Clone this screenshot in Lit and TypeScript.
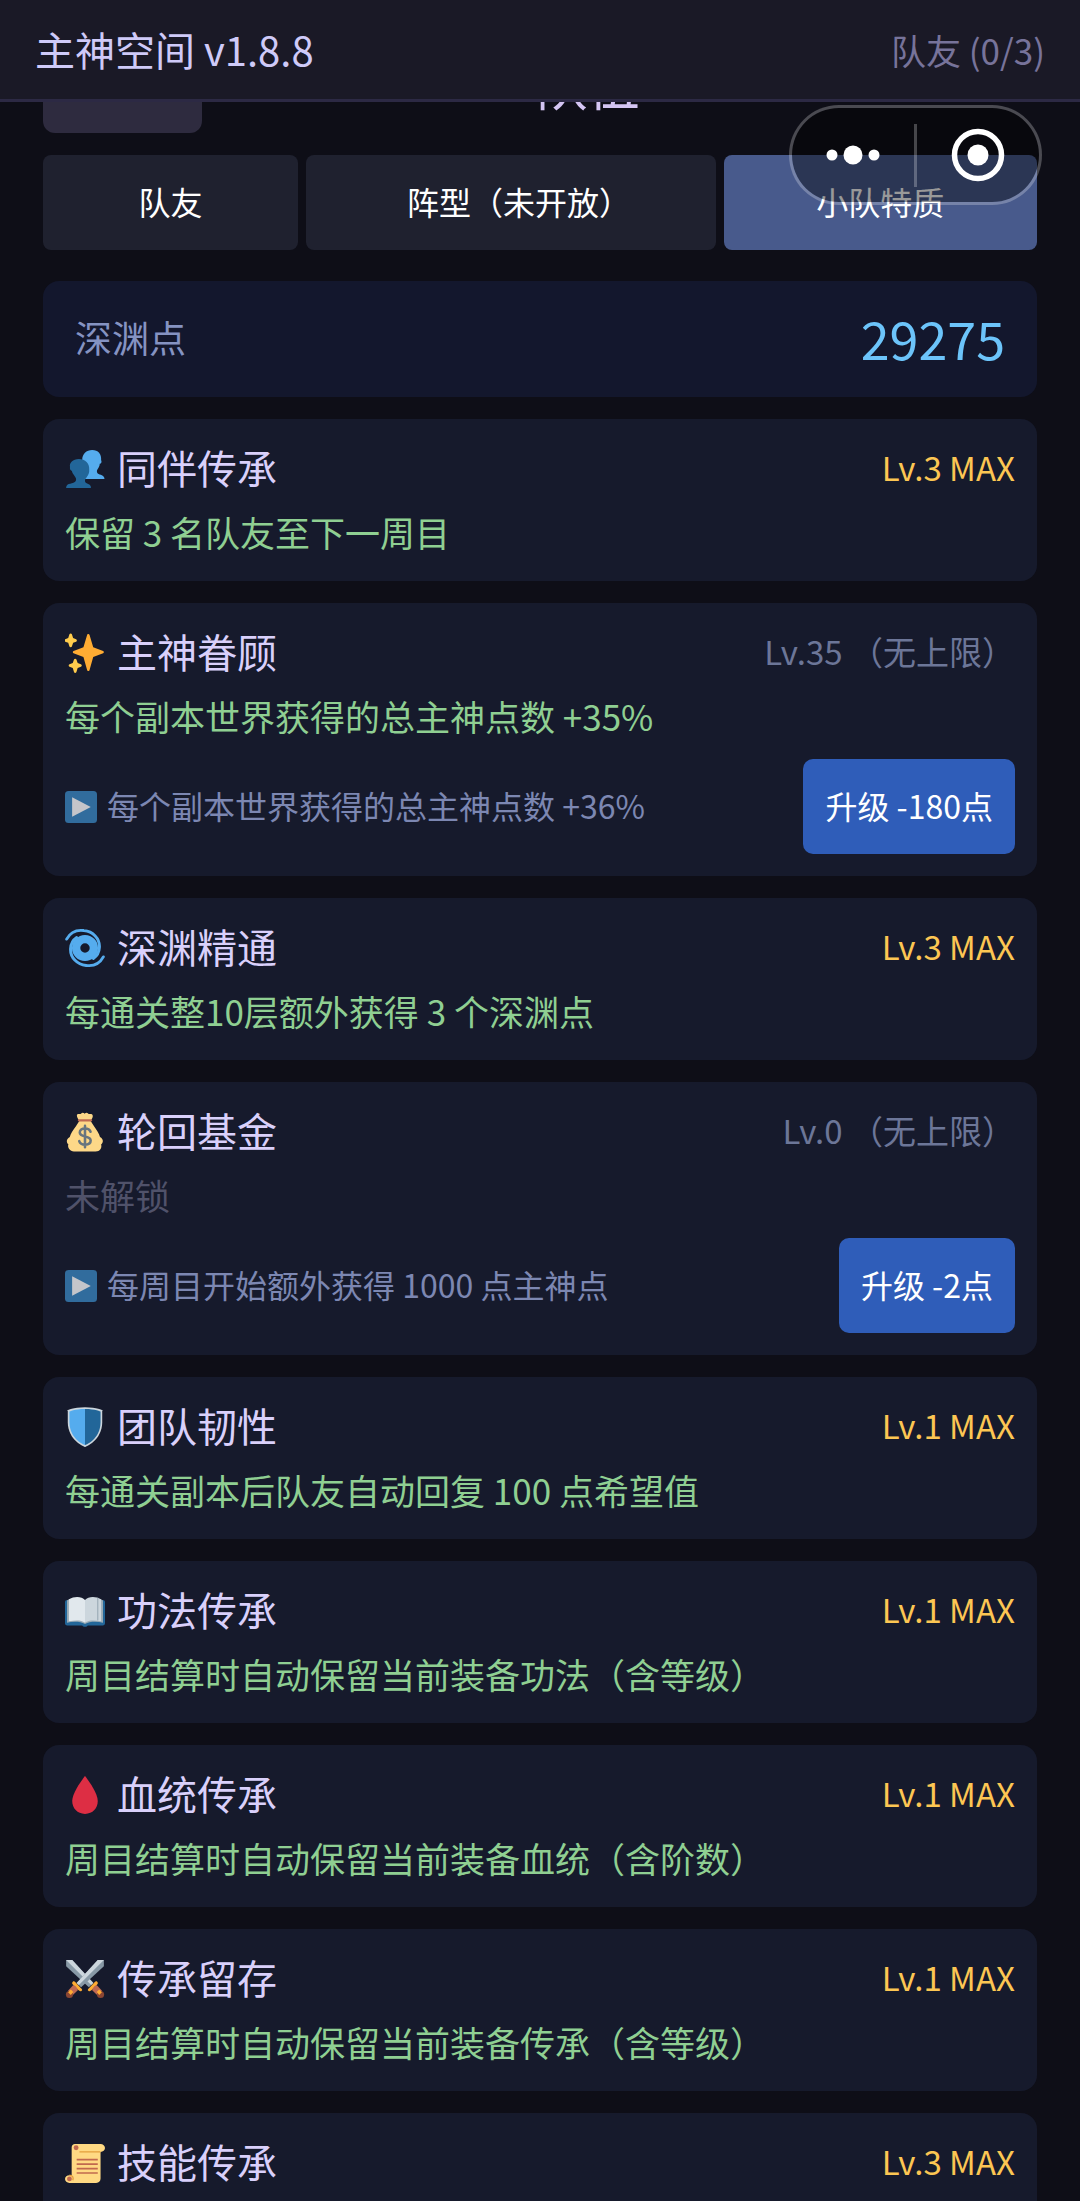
import {LitElement, html, css, svg, nothing} from 'lit';
import {customElement, property} from 'lit/decorators.js';
import {classMap} from 'lit/directives/class-map.js';

interface Trait {
  icon: string;
  name: string;
  level: string;
  max: boolean;
  effect: string;
  locked?: boolean;
  next?: string;
  cost?: number;
}

const TRAITS: Trait[] = [
  {icon: 'people', name: '同伴传承', level: 'Lv.3 MAX', max: true, effect: '保留 3 名队友至下一周目'},
  {
    icon: 'sparkles', name: '主神眷顾', level: 'Lv.35 （无上限）', max: false,
    effect: '每个副本世界获得的总主神点数 +35%',
    next: '每个副本世界获得的总主神点数 +36%', cost: 180,
  },
  {icon: 'cyclone', name: '深渊精通', level: 'Lv.3 MAX', max: true, effect: '每通关整10层额外获得 3 个深渊点'},
  {
    icon: 'bag', name: '轮回基金', level: 'Lv.0 （无上限）', max: false,
    effect: '未解锁', locked: true,
    next: '每周目开始额外获得 1000 点主神点', cost: 2,
  },
  {icon: 'shield', name: '团队韧性', level: 'Lv.1 MAX', max: true, effect: '每通关副本后队友自动回复 100 点希望值'},
  {icon: 'book', name: '功法传承', level: 'Lv.1 MAX', max: true, effect: '周目结算时自动保留当前装备功法（含等级）'},
  {icon: 'drop', name: '血统传承', level: 'Lv.1 MAX', max: true, effect: '周目结算时自动保留当前装备血统（含阶数）'},
  {icon: 'swords', name: '传承留存', level: 'Lv.1 MAX', max: true, effect: '周目结算时自动保留当前装备传承（含等级）'},
  {icon: 'scroll', name: '技能传承', level: 'Lv.3 MAX', max: true, effect: ''},
];

const sword = svg`
  <path d="M1 1h5.5L25.500 21.500 21.500 25.500 1 6.500z" fill="#8899a6"/>
  <path d="M1 1h5.500L25.500 21.500 23.500 23.500z" fill="#ccd6dd"/>
  <path d="M29 20.500c1.200 1.200.4 2.200-.5 3L24 28c-.9.900-2 1.600-3 .6s-.3-1.600.8-2.600l4.600-4.800c.8-.9 1.600-1.700 2.600-.7z" fill="#ffac33"/>
  <path d="M26.500 24.500l2-1 4.800 5-4 4.300-5-4.800 1-2z" fill="#bf6952"/>
  <circle cx="32" cy="32" r="3.200" fill="#8a4633"/>
  <path d="M28.500 29.800l2.300-2.300 2.400 2.400-2.400 2.400z" fill="#ffac33"/>
`;

// All glyphs share a 36 unit square.
const ICONS: Record<string, unknown> = {
  people: svg`
    <path d="M34.500 24.500c-1-1.700-5.800-1-5.800-4.500 0-1.200 1-2 1.800-3.700.5-1 .7-2 .8-3 1.500 0 2-1.500 1.200-3.300.5-5.300-2.700-9-8-9s-9 3.600-9 9c-.5 3 .5 5.500 1.800 7.500 1 1.700 1.700 2.500 1.700 3.700 0 2-1 3.300-1 5.800h17.500c0-1-.3-1.700-1-2.500z" fill="#55acee"/>
    <path d="M1.500 33c1.200-2.500 8.500-1.500 8.500-5.500 0-1.500-1-2.500-2.300-4.500-.7-1.200-1.200-2-1.500-3.300-1.500-.2-2-1.700-1.700-3.400C3.700 12.500 7 9 12.500 9c5.700 0 9.700 4 9.300 9.300.3 3.200-.8 5.200-2.300 7.200-1 1.400-1.500 2-1.500 3.200 0 3 4.800 1.800 5.300 5.300v1H1c0-.7.200-1.500.5-2z" fill="#226699"/>
  `,
  sparkles: svg`
    <path d="M34.300 16.100l-8.900-3.300-3.300-10.900c-.2-.5-.6-.9-1.100-.9s-1 .4-1.100.9l-3.300 10.900-8.900 3.300c-.4.200-.7.600-.7 1.100s.3.900.7 1.100l8.900 3.300 3.300 11.700c.1.500.6.900 1.100.9s1-.4 1.100-.9l3.300-11.700 8.900-3.300c.4-.2.700-.6.700-1.100s-.3-.9-.7-1.100z" fill="#ffac33"/>
    <path d="M14.300 28.200l-2.900-1.100-1.100-3.200c-.2-.5-.6-.8-1.100-.8s-1 .3-1.100.8L7 27.100l-2.900 1.100c-.5.200-.8.600-.8 1.100s.3.900.8 1.100L7 31.500l1.100 3.600c.2.500.6.800 1.100.8s1-.3 1.100-.8l1.100-3.600 2.900-1.100c.5-.2.800-.6.800-1.100s-.3-.9-.8-1.100zM10 5.600L7.300 4.500 6.200 1.200C6 .7 5.600.4 5.100.4s-.9.300-1.100.8L2.900 4.500.2 5.600c-.4.100-.7.600-.7 1.100s.3.900.7 1.100l2.700 1 1.100 3.300c.2.400.6.700 1.100.7s.9-.3 1.100-.7l1.100-3.300 2.700-1c.4-.2.700-.6.700-1.100s-.3-1-.7-1.100z" fill="#ffcc4d"/>
  `,
  cyclone: svg`
    <circle cx="18" cy="18" r="8" fill="none" stroke="#55acee" stroke-width="7.500"/>
    <path d="M1.500 10C5 3.500 11 1.500 17 2.300c8 .8 14.500 7 14 15.200-.3 5-2.500 8-5.500 10M34.500 26c-3.500 6.500-9.500 8.500-15.500 7.700C11 32.900 4.500 26.700 5 18.500c.3-5 2.500-8 5.500-10" fill="none" stroke="#55acee" stroke-width="2.600" stroke-linecap="round"/>
  `,
  bag: svg`
    <path d="M31.500 22.500c-.7-3-3-6.500-5.500-10-1.300-1.800-2-3.500-3-4.500 1.500-2 2.500-4 1.800-5.300C23.800.8 22 2.500 21 1.500c-1-1.300-2.500-1-3.300 0-1-1-2.400-1.200-3.300 0-1 1-3-.5-3.600 1C10.200 4 11.500 6 13 8c-1 1-1.800 2.700-3 4.500-2.700 3.500-5 7-5.700 10C.5 24.500 1.500 28 3 29c-1 3 1.500 6.500 5 6.500h19.500c4 0 6-3.300 5-6.300 2.200-1.500 2.300-5.200-1-6.700z" fill="#fdd888"/>
    <path d="M12.500 7.500h11" stroke="#bf6952" stroke-width="2" stroke-linecap="round"/>
    <path d="M23 17.800c-.8-2.200-2.600-3-5-3-2.800 0-4.700 1.300-4.700 3.600 0 5 9.800 2.200 9.800 7.300 0 2.300-2 3.700-5 3.700-2.700 0-4.600-1-5.300-3.200M18 12.500v19.200" fill="none" stroke="#67757f" stroke-width="2.300" stroke-linecap="round"/>
  `,
  shield: svg`
    <path d="M18 36S2.500 30.500 2.500 13.500V3S7 .3 18 .3 33.500 3 33.500 3v10.500C33.500 30.500 18 36 18 36z" fill="#ccd6dd"/>
    <path d="M18 34.300S4 29.500 4 13.500V4.200S8.500 1.900 18 1.900z" fill="#55acee"/>
    <path d="M18 34.300s14-4.800 14-20.800V4.200S27.500 1.900 18 1.900z" fill="#226699"/>
  `,
  book: svg`
    <path d="M2 8h32c1.200 0 2 .8 2 2v19c0 1.200-.8 2-2 2H20.500c-.6 1.500-4.400 1.500-5 0H2c-1.200 0-2-.8-2-2V10c0-1.200.8-2 2-2z" fill="#226699"/>
    <path d="M1.800 8.500C6 5.800 14 5 18 8.500c4-3.500 12-2.700 16.200 0V28.500c-5-1-12-1.300-16.200 1.200-4.200-2.500-11.200-2.200-16.200-1.200z" fill="#99aab5"/>
    <path d="M3.500 7.500C8 4.500 15 4.500 18 8v20.500c-4-2.800-9-2-14.500-1.300z" fill="#e1e8ed"/>
    <path d="M32.500 7.500C28 4.500 21 4.500 18 8v20.500c4-2.800 9-2 14.500-1.300z" fill="#ccd6dd"/>
    <path d="M29.500 6v20.500" stroke="#99aab5"/>
  `,
  drop: svg`<path d="M29.500 23.500C29.500 30 25 35 18 35S6.500 30 6.500 23.500C6.500 15 18 1 18 1s11.500 14 11.500 22.500z" fill="#dd2e44"/>`,
  swords: svg`
    <g>${sword}</g>
    <g transform="matrix(-1 0 0 1 36 0)">${sword}</g>
  `,
  scroll: svg`
    <path d="M9 1h23c2.200 0 4 1.600 4 3.600S34.200 8 32 8v24c0 2-1.300 4-4 4H4c-2.200 0-4-1.500-4-3.500S1.800 29 4 29h2V4c0-1.700 1.200-3 3-3z" fill="#ffd983"/>
    <path d="M13 8h19M4 29c2.700 0 4 1.700 3 4.500" fill="none" stroke="#e39f3d" stroke-width="1.200"/>
    <circle cx="10" cy="4.300" r="2.200" fill="#c1694f"/>
    <circle cx="4" cy="32.300" r="2.200" fill="#c1694f"/>
    <path d="M10.500 15h19M10.500 19h19M10.500 23h19M10.500 27h19" stroke="#c1694f" stroke-width="1.500"/>
  `,
  play: svg`
    <rect width="36" height="36" rx="4" fill="#3b88c3"/>
    <path d="M8 7l21 11L8 29z" fill="#fff"/>
  `,
};

const icon = (name: string) => svg`
  <svg class="icon" viewBox="0 0 36 36" aria-hidden="true">${ICONS[name]}</svg>
`;

@customElement('trait-card')
export class TraitCard extends LitElement {
  @property({attribute: false}) trait!: Trait;

  static styles = css`
    :host {
      display: block;
      padding: 22px;
      border-radius: 16px;
      background: #161a2c;
    }

    .head {
      display: flex;
      align-items: center;
      height: 56px;
    }

    .icon {
      display: block;
      flex: none;
      width: 40px;
      height: 40px;
    }

    .name,
    .level,
    .next-text {
      padding-bottom: 4px;
      line-height: 52px;
    }

    .name {
      flex: 1;
      margin: 0 0 0 12px;
      font-size: 40px;
      font-weight: inherit;
      color: #d9d0fb;
    }

    .level {
      font-size: 33px;
      color: #6c7698;
    }

    .level.max {
      color: #fcc653;
    }

    .effect {
      min-height: 46px;
      margin: 12px 0 0;
      padding-bottom: 4px;
      font-size: 35px;
      line-height: 46px;
      color: #8fcf92;
    }

    .effect.locked {
      color: #50526a;
    }

    .upgrade {
      display: flex;
      align-items: center;
      justify-content: space-between;
      margin-top: 16px;
    }

    .next {
      display: flex;
      align-items: center;
      gap: 10px;
      margin: 0;
      font-size: 32px;
      color: #7c87b2;
    }

    .next .icon {
      width: 32px;
      height: 32px;
      opacity: 0.75;
    }

    button {
      flex: none;
      min-height: 95px;
      padding: 0 22px 4px;
      border: 0;
      border-radius: 10px;
      background: #2f5db9;
      color: #fff;
      font: inherit;
      font-size: 32px;
    }
  `;

  render() {
    const t = this.trait;
    return html`
      <div class="head">
        ${icon(t.icon)}
        <h2 class="name">${t.name}</h2>
        <span class=${classMap({level: true, max: t.max})}>${t.level}</span>
      </div>
      <p class=${classMap({effect: true, locked: !!t.locked})}>${t.effect}</p>
      ${t.next
        ? html`
            <div class="upgrade">
              <p class="next">${icon('play')}<span class="next-text">${t.next}</span></p>
              <button type="button">升级 -${t.cost}点</button>
            </div>
          `
        : nothing}
    `;
  }
}

@customElement('app-root')
export class AppRoot extends LitElement {
  static styles = css`
    :host {
      display: flex;
      flex-direction: column;
      height: 100vh;
      overflow: hidden;
      background: #0e0e17;
      color: #fff;
      font-family: "Noto Sans CJK SC", sans-serif;
      font-weight: 400;
    }

    .top {
      display: flex;
      flex: none;
      align-items: center;
      justify-content: space-between;
      padding: 0 35px;
      border-bottom: 3px solid #2c2944;
      background: #1a1926;
      line-height: 99px;
    }

    .app-name {
      margin: 0;
      font-size: 40px;
      font-weight: inherit;
      color: #cfcaf8;
    }

    .members {
      font-size: 35px;
      color: #77739a;
    }

    main {
      flex: 1;
      min-height: 0;
      padding: 0 43px;
      overflow-y: auto;
      scrollbar-width: none;
    }

    /* The page title is scrolled half way under the top bar. */
    .page-head {
      display: flex;
      align-items: center;
      justify-content: space-between;
      height: 92px;
      margin-top: -61px;
    }

    .page-head::after {
      content: "";
      width: 64px;
    }

    .back {
      width: 159px;
      height: 92px;
      padding: 0;
      border: 0;
      border-radius: 12px;
      background: #2e2b3f;
    }

    .page-title {
      margin: 0;
      padding-bottom: 8px;
      font-size: 52px;
      font-weight: inherit;
      color: #d4c5f3;
    }

    .tabs {
      display: grid;
      grid-template-columns: 255fr 409fr 313fr;
      gap: 8px;
      margin-top: 22px;
    }

    .tab {
      height: 95px;
      padding: 0 0 4px;
      border: 0;
      border-radius: 8px;
      background: #1f212f;
      color: #fff;
      font: inherit;
      font-size: 32px;
    }

    .tab.active {
      background: #485a8c;
    }

    /* A closing bracket takes half a width at the end of the line. */
    .close {
      font-feature-settings: "halt";
    }

    .points {
      display: flex;
      align-items: center;
      justify-content: space-between;
      box-sizing: border-box;
      height: 116px;
      margin-top: 31px;
      padding: 0 32px 4px;
      border-radius: 16px;
      background: #13172d;
    }

    .points-label {
      font-size: 37px;
      color: #8593c2;
    }

    .points-value {
      font-size: 52px;
      color: #6cc4fa;
    }

    .traits {
      display: grid;
      gap: 22px;
      margin-top: 22px;
    }

    .capsule {
      position: fixed;
      top: 105px;
      right: 38px;
      display: flex;
      align-items: center;
      box-sizing: border-box;
      width: 253px;
      height: 100px;
      border: 3px solid rgba(255, 255, 255, 0.25);
      border-radius: 50px;
      background: rgba(0, 0, 0, 0.4);
      background-clip: padding-box;
    }

    .capsule button {
      display: grid;
      flex: 1;
      place-items: center;
      padding: 0;
      border: 0;
      background: none;
    }

    .capsule svg {
      display: block;
      fill: #fff;
    }

    .divider {
      width: 3px;
      height: 63px;
      background: rgba(255, 255, 255, 0.25);
    }
  `;

  render() {
    return html`
      <header class="top">
        <h1 class="app-name">主神空间 v1.8.8</h1>
        <span class="members">队友 (0/3)</span>
      </header>
      <main>
        <div class="page-head">
          <button class="back" type="button" aria-label="返回"></button>
          <h2 class="page-title">队伍</h2>
        </div>
        <nav class="tabs">
          <button class="tab" type="button">队友</button>
          <button class="tab" type="button">阵型（未开放<span class="close">）</span></button>
          <button class="tab active" type="button">小队特质</button>
        </nav>
        <section class="points">
          <span class="points-label">深渊点</span>
          <span class="points-value">29275</span>
        </section>
        <section class="traits">
          ${TRAITS.map((t) => html`<trait-card .trait=${t}></trait-card>`)}
        </section>
      </main>
      <div class="capsule">
        <button type="button" aria-label="更多">
          <svg width="54" height="20" viewBox="0 0 54 20">
            <circle cx="6" cy="10" r="5.500" />
            <circle cx="27" cy="10" r="9.500" />
            <circle cx="48" cy="10" r="5.500" />
          </svg>
        </button>
        <span class="divider"></span>
        <button type="button" aria-label="关闭">
          <svg width="54" height="54" viewBox="0 0 54 54">
            <circle cx="27" cy="27" r="23.500" fill="none" stroke="#fff" stroke-width="5.500" />
            <circle cx="27" cy="27" r="10.500" />
          </svg>
        </button>
      </div>
    `;
  }
}
